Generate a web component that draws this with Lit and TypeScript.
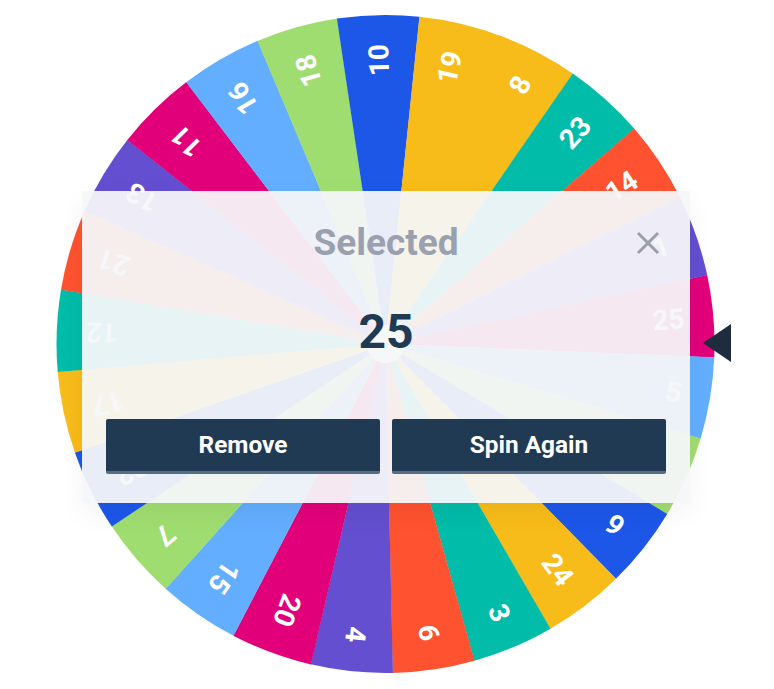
import { LitElement, html, css, svg } from "lit";
import { customElement } from "lit/decorators.js";

const CX = 385.5, CY = 344, R = 329;
const START = -12.1, STEP = 14.4;
const C = { blue: "#1c57e8", yellow: "#f7bc1a", teal: "#00bca8", orange: "#ff5230", purple: "#634fd0", magenta: "#e2007a", sky: "#63aeff", green: "#a0dd70" };
const SEGS: [string, string][] = [
  ["25", C.magenta], ["5", C.sky], ["2", C.green], ["9", C.blue], ["24", C.yellow], ["3", C.teal], ["6", C.orange], ["4", C.purple],
  ["20", C.magenta], ["15", C.sky], ["7", C.green], ["22", C.blue], ["17", C.yellow], ["12", C.teal], ["21", C.orange], ["13", C.purple],
  ["11", C.magenta], ["16", C.sky], ["18", C.green], ["10", C.blue], ["19", C.yellow], ["8", C.yellow], ["23", C.teal], ["14", C.orange], ["1", C.purple],
];
const pt = (deg: number) => {
  const a = (deg * Math.PI) / 180;
  return `${(CX + R * Math.cos(a)).toFixed(2)} ${(CY + R * Math.sin(a)).toFixed(2)}`;
};

@customElement("app-root")
export class AppRoot extends LitElement {
  static styles = css`
    :host { display: block; position: relative; width: 774px; height: 689px; background: #fff; overflow: hidden; font-family: Roboto, "Liberation Sans", sans-serif; }
    .wheel { display: block; }
    .label { font: 700 28px Roboto, sans-serif; fill: #fff; }
    .modal {
      position: absolute; left: 82px; top: 191px; width: 608px; height: 312px; box-sizing: border-box;
      padding: 24px 24px 29px; display: flex; flex-direction: column;
      background: rgba(245, 246, 249, 0.94);
      box-shadow: 0 10px 25px rgba(0, 0, 0, 0.05);
    }
    .head { display: flex; align-items: center; justify-content: center; height: 54px; position: relative; }
    .title { font-size: 37px; font-weight: 700; color: #9aa0ad; line-height: 54px; margin-top: 2px; }
    .close { position: absolute; right: 6px; top: 16px; width: 24px; height: 24px; display: block; }
    .value { flex: 1; display: flex; align-items: flex-start; justify-content: center; padding-top: 35px; font-size: 48px; font-weight: 700; line-height: 56px; color: #203a53; }
    .actions { display: flex; gap: 12px; }
    .btn {
      flex: 1; height: 55px; box-sizing: border-box; border: 0; border-bottom: 3px solid #566d85; border-radius: 2px;
      background: #203a53; color: #fff; font: 700 24.4px Roboto, "Liberation Sans", sans-serif; padding: 0 0 2px;
    }
  `;

  render() {
    return html`
      <svg class="wheel" width="774" height="689" viewBox="0 0 774 689">
        ${SEGS.map(([, c], i) => {
          const a = START + i * STEP;
          const next = SEGS[(i + 1) % SEGS.length][1];
          const overlap = next === c ? 1 : 0.05;
          return svg`<path fill=${c} d="M${CX} ${CY}L${pt(a)}A${R} ${R} 0 0 1 ${pt(a + STEP + overlap)}Z"></path>`;
        })}
        ${SEGS.map(([n], i) => {
          const m = START + (i + 0.5) * STEP;
          return svg`<text class="label" text-anchor="end" dominant-baseline="central" x="300" y="0" transform="translate(${CX} ${CY}) rotate(${m})">${n}</text>`;
        })}
        <circle cx=${CX} cy=${CY} r="19" fill="#fff"></circle>
        <polygon points="703,343 731,324 731,362" fill="#1e2d3d"></polygon>
      </svg>
      <div class="modal">
        <div class="head">
          <span class="title">Selected</span>
          <svg class="close" viewBox="0 0 24 24"><path d="M2 2L22 22M22 2L2 22" stroke="#9a9fa8" stroke-width="3" fill="none"></path></svg>
        </div>
        <div class="value">25</div>
        <div class="actions">
          <button class="btn">Remove</button>
          <button class="btn">Spin Again</button>
        </div>
      </div>
    `;
  }
}
